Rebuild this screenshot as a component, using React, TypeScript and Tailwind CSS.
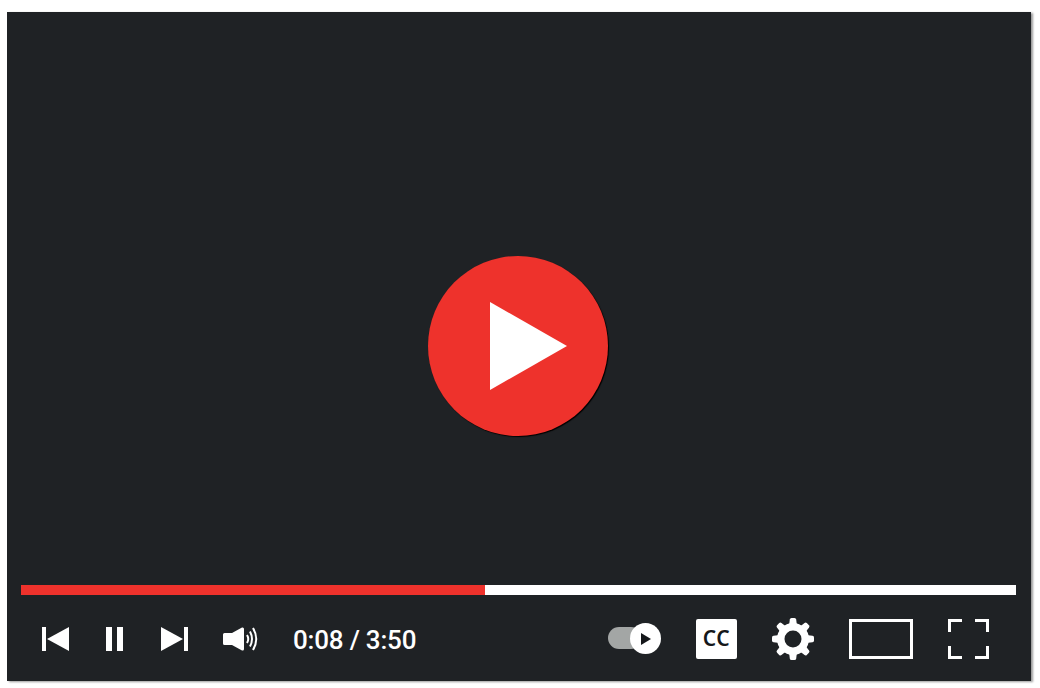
export default function App() {
  return (
    <div className="h-[688px] w-[1040px] overflow-hidden bg-white pt-3 pl-[7px] font-['Roboto',sans-serif]">
      <div className="flex h-[669px] w-[1024px] flex-col bg-[#1f2225] shadow-[2px_1px_2px_#9a9a9a]">

        {/* video area */}
        <div className="flex h-[573px] justify-center pt-[244px] pr-[2px]">
          <div className="flex h-[180px] w-[180px] items-center justify-center rounded-full bg-[#ee322c] shadow-[1px_1px_1px_#000]">
            <svg width="180" height="180" viewBox="0 0 180 180">
              <path d="M62 46 L139 90 L62 134 Z" fill="#fff" />
            </svg>
          </div>
        </div>

        {/* progress */}
        <div className="mr-[15px] ml-[14px] flex h-[10px]">
          <div className="h-full w-[464px] bg-[#ee322c]"></div>
          <div className="h-full flex-1 bg-white"></div>
        </div>

        {/* controls */}
        <div className="flex flex-1 items-center justify-between pt-[1px] pr-[42px] pl-[35px]">
          <div className="flex items-center">
            <svg width="27" height="24" viewBox="0 0 27 24" fill="#fff">
              <rect x="0" y="0" width="4" height="24" />
              <path d="M27 0 V24 L5 12 Z" />
            </svg>
            <svg className="ml-[37px]" width="17" height="24" viewBox="0 0 17 24" fill="#fff">
              <rect x="0" y="0" width="6" height="24" />
              <rect x="11" y="0" width="6" height="24" />
            </svg>
            <svg className="ml-[38px]" width="27" height="24" viewBox="0 0 27 24" fill="#fff">
              <path d="M0 0 V24 L22 12 Z" />
              <rect x="23" y="0" width="4" height="24" />
            </svg>
            <svg className="ml-[35px]" width="36" height="26" viewBox="0 0 36 26" fill="none">
              <path d="M1.5 7 H9 L19 1.5 Q21 1 21 3 V23 Q21 25 19 24.5 L9 19 H1.5 Q0 19 0 17.5 V8.5 Q0 7 1.5 7 Z" fill="#fff" />
              <path d="M24 9 Q26.5 13 24 17" stroke="#fff" strokeWidth="2" />
              <path d="M27 5.5 Q31 13 27 20.5" stroke="#fff" strokeWidth="2" />
              <path d="M30 2 Q36.5 13 30 24" stroke="#fff" strokeWidth="2" />
            </svg>
            <span className="mt-[2px] ml-[34px] text-[26px] font-medium leading-none tracking-[-0.2px] text-white">0:08 / 3:50</span>
          </div>

          <div className="flex items-center">
            {/* autoplay toggle */}
            <div className="relative h-[31px] w-[53px]">
              <div className="mt-1 h-[22px] w-[34px] rounded-full bg-[#a3a6a5]"></div>
              <div className="absolute top-0 right-0 flex h-[31px] w-[31px] items-center justify-center rounded-full bg-white">
                <svg width="12" height="14" viewBox="0 0 12 14">
                  <path d="M1 1 L11 7 L1 13 Z" fill="#15171a" />
                </svg>
              </div>
            </div>
            {/* captions */}
            <div className="ml-[35px] flex h-[40px] w-[41px] items-center justify-center rounded-[2px] bg-white font-['Noto_Sans',sans-serif] text-[21px] font-semibold leading-none tracking-[0.5px] text-[#15171a]">
              CC
            </div>
            {/* settings */}
            <svg className="ml-[35px]" width="42" height="42" viewBox="0 0 42 42">
              {[0, 45, 90, 135, 180, 225, 270, 315].map((a) => (
                <path key={a} d="M17 8 L17.8 1.5 Q18 0 19.5 0 H22.5 Q24 0 24.2 1.5 L25 8 Z" fill="#fff" transform={`rotate(${a} 21 21)`} />
              ))}
              <circle cx="21" cy="21" r="12.25" fill="none" stroke="#fff" strokeWidth="7.5" />
            </svg>
            {/* theatre */}
            <div className="ml-[35px] h-[40px] w-[64px] border-[3px] border-white"></div>
            {/* fullscreen */}
            <svg className="ml-[35px]" width="41" height="40" viewBox="0 0 41 40" fill="none" stroke="#fff" strokeWidth="3">
              <path d="M1.5 13 V1.5 H14" />
              <path d="M27 1.5 H39.5 V13" />
              <path d="M1.5 27 V38.5 H14" />
              <path d="M27 38.5 H39.5 V27" />
            </svg>
          </div>
        </div>
      </div>
    </div>
  );
}
